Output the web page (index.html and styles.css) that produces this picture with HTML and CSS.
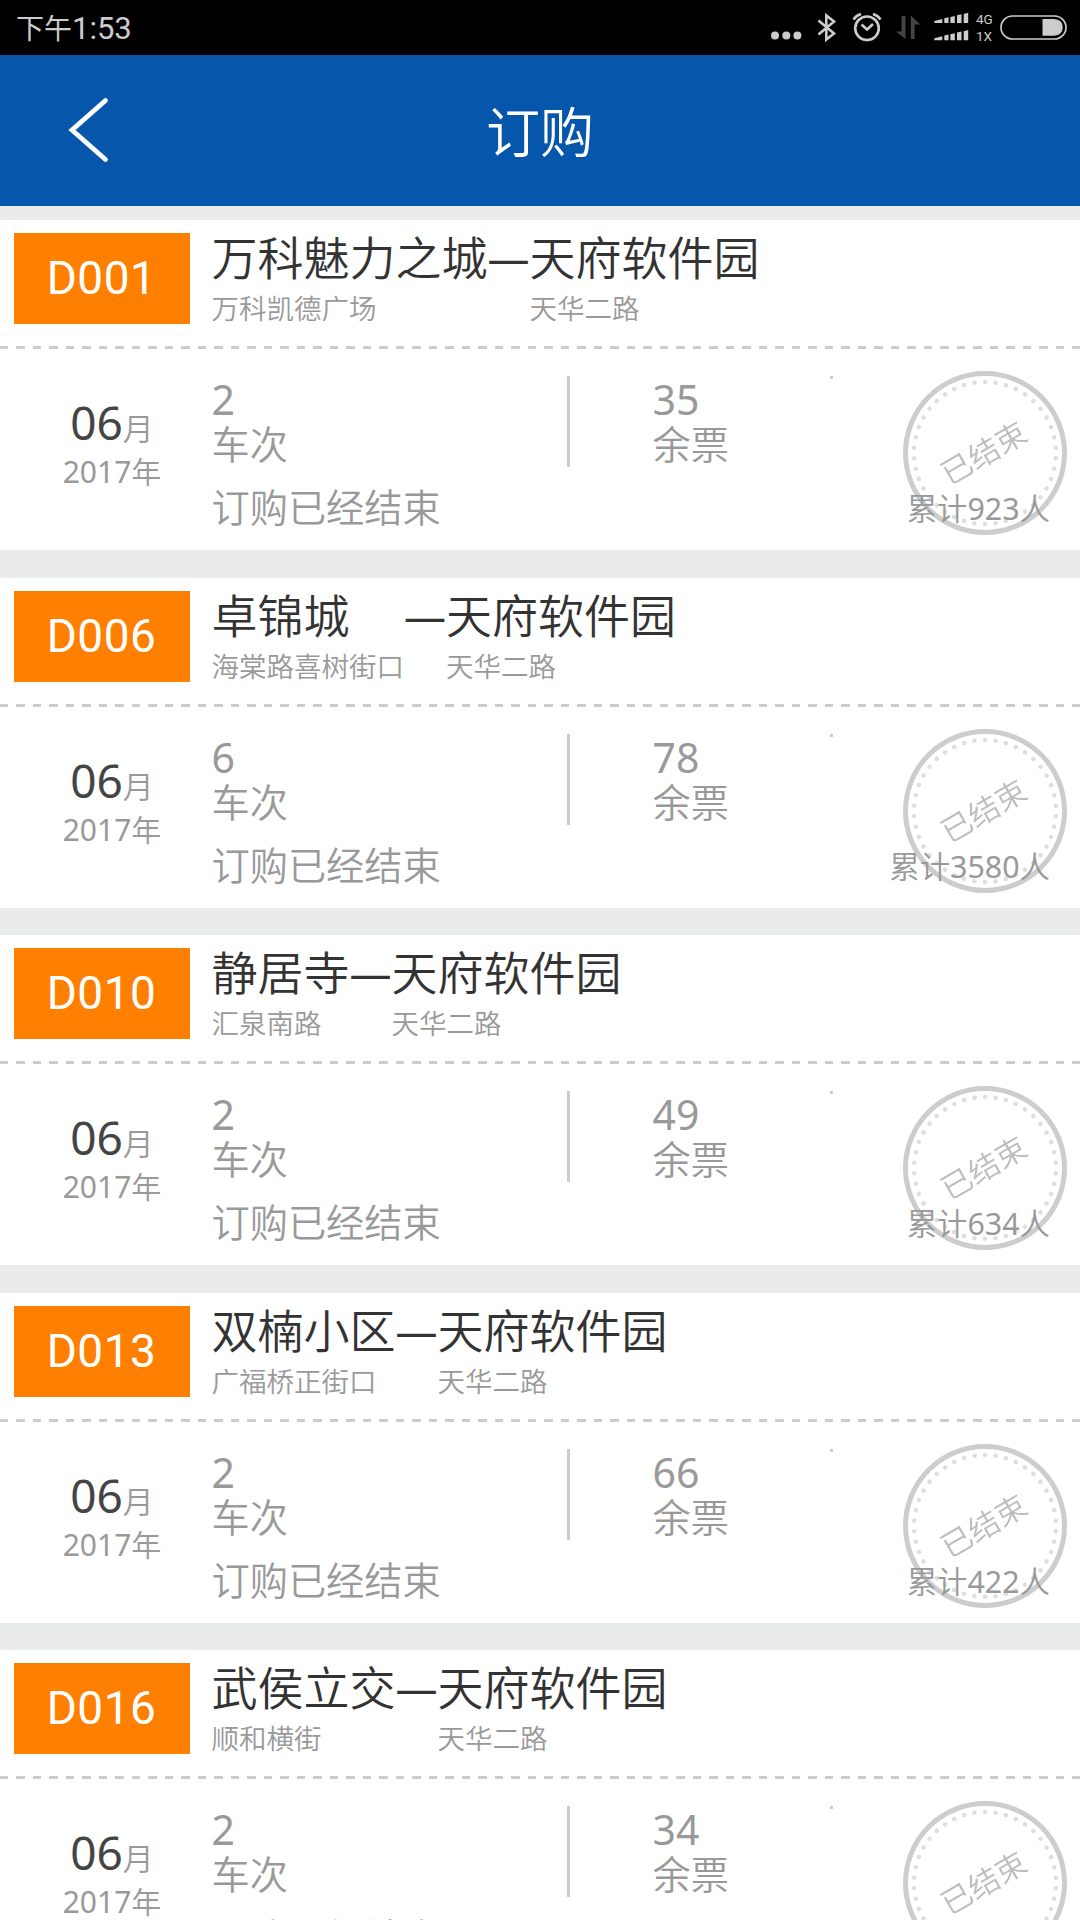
FILE: index.html
```html
<!DOCTYPE html>
<html lang="zh-CN">
<head>
    <meta charset="UTF-8">
    <meta name="viewport" content="width=device-width, initial-scale=1.0">
    <title>订购</title>
    <link rel="stylesheet" href="styles.css">
</head>
<body>

    <!-- 印章 -->
    <svg class="defs" width="0" height="0">
        <symbol id="stamp" viewBox="0 0 166 166">
            <circle cx="83" cy="83" r="79.5" fill="none" stroke="#cdcdcd" stroke-width="5"/>
            <circle cx="83" cy="83" r="71" fill="none" stroke="#dedede" stroke-width="4.4" stroke-linecap="round" pathLength="420" stroke-dasharray="0.1 9.9" stroke-dashoffset="5"/>
            <text x="82" y="93.5" transform="rotate(-30 83 83)" text-anchor="middle" textLength="93" lengthAdjust="spacingAndGlyphs" font-size="30" fill="#bdbdbd">已结束</text>
        </symbol>
    </svg>

    <div class="status-bar">
        <span class="time">下午<span>1:53</span></span>
        <svg class="status-icons" width="340" height="55" viewBox="0 0 340 55">
            <g fill="#ccc">
                <circle cx="35" cy="35.5" r="4"/>
                <circle cx="46.3" cy="35.5" r="4"/>
                <circle cx="57.4" cy="35.5" r="4"/>
            </g>
            <path d="M78.5 20.5L94 33.5L86.3 39.5V15.5L94 21.5L78.5 34.5" fill="none" stroke="#ccc" stroke-width="2.6"/>
            <g fill="none" stroke="#ccc" stroke-width="2.6">
                <circle cx="127" cy="28.3" r="11.8"/>
                <path d="M121.5 24.5L127 29.5L133 24"/>
                <path d="M113.5 19.5Q116 15.5 121 14M140.5 19.5Q138 15.5 133 14"/>
            </g>
            <path d="M161.5 16H165.5V39L156 31.5H161.5ZM170.8 39V15.5L180.3 24.5H174.6V39Z" fill="#444"/>
            <g fill="#ccc">
                <path id="signal" d="M194.3 22.9V21L202.3 19V22.9ZM204.3 22.9V18.3L208.5 17.3V22.9ZM210.4 22.9V17L214.8 16V22.9ZM217 22.9V15.3L221.5 14.2V22.9ZM223.7 22.9V14L228.2 12.8V22.9Z"/>
                <use href="#signal" y="17.3"/>
                <text x="236" y="24" font-size="13.5">4G</text>
                <text x="236" y="41" font-size="13.5">1X</text>
                <path d="M302.5 19H314Q322.7 19.5 322.7 27.3Q322.7 35.2 314 35.7H302.5Z"/>
            </g>
            <rect x="261" y="16" width="65" height="23" rx="11.5" fill="none" stroke="#ccc" stroke-width="1.7"/>
        </svg>
    </div>

    <div class="header">
        <svg class="back" width="44" height="70" viewBox="0 0 44 70">
            <path d="M39.5 4.5L6 34L39.5 63.5" fill="none" stroke="#fff" stroke-width="4.8" stroke-linecap="round"/>
        </svg>
        <h1>订购</h1>
    </div>

    <div class="list">
        <div class="card">
            <div class="card-top">
                <div class="code">D001</div>
                <div class="station"><h2>万科魅力之城</h2><p>万科凯德广场</p></div>
                <span class="dash">—</span>
                <div class="station"><h2>天府软件园</h2><p>天华二路</p></div>
            </div>
            <div class="card-body">
                <div class="date"><div class="month"><b>06</b>月</div><div class="year">2017年</div></div>
                <div class="runs"><div class="num">2</div><div class="label">车次</div><div class="state">订购已经结束</div></div>
                <div class="tickets"><div class="num">35</div><div class="label">余票</div></div>
                <i class="dot"></i>
                <svg class="stamp"><use href="#stamp"/></svg>
                <div class="total">累计923人</div>
            </div>
        </div>

        <div class="card">
            <div class="card-top">
                <div class="code">D006</div>
                <div class="station"><h2>卓锦城</h2><p>海棠路喜树街口</p></div>
                <span class="dash">—</span>
                <div class="station"><h2>天府软件园</h2><p>天华二路</p></div>
            </div>
            <div class="card-body">
                <div class="date"><div class="month"><b>06</b>月</div><div class="year">2017年</div></div>
                <div class="runs"><div class="num">6</div><div class="label">车次</div><div class="state">订购已经结束</div></div>
                <div class="tickets"><div class="num">78</div><div class="label">余票</div></div>
                <i class="dot"></i>
                <svg class="stamp"><use href="#stamp"/></svg>
                <div class="total">累计3580人</div>
            </div>
        </div>

        <div class="card">
            <div class="card-top">
                <div class="code">D010</div>
                <div class="station"><h2>静居寺</h2><p>汇泉南路</p></div>
                <span class="dash">—</span>
                <div class="station"><h2>天府软件园</h2><p>天华二路</p></div>
            </div>
            <div class="card-body">
                <div class="date"><div class="month"><b>06</b>月</div><div class="year">2017年</div></div>
                <div class="runs"><div class="num">2</div><div class="label">车次</div><div class="state">订购已经结束</div></div>
                <div class="tickets"><div class="num">49</div><div class="label">余票</div></div>
                <i class="dot"></i>
                <svg class="stamp"><use href="#stamp"/></svg>
                <div class="total">累计634人</div>
            </div>
        </div>

        <div class="card">
            <div class="card-top">
                <div class="code">D013</div>
                <div class="station"><h2>双楠小区</h2><p>广福桥正街口</p></div>
                <span class="dash">—</span>
                <div class="station"><h2>天府软件园</h2><p>天华二路</p></div>
            </div>
            <div class="card-body">
                <div class="date"><div class="month"><b>06</b>月</div><div class="year">2017年</div></div>
                <div class="runs"><div class="num">2</div><div class="label">车次</div><div class="state">订购已经结束</div></div>
                <div class="tickets"><div class="num">66</div><div class="label">余票</div></div>
                <i class="dot"></i>
                <svg class="stamp"><use href="#stamp"/></svg>
                <div class="total">累计422人</div>
            </div>
        </div>

        <div class="card">
            <div class="card-top">
                <div class="code">D016</div>
                <div class="station"><h2>武侯立交</h2><p>顺和横街</p></div>
                <span class="dash">—</span>
                <div class="station"><h2>天府软件园</h2><p>天华二路</p></div>
            </div>
            <div class="card-body">
                <div class="date"><div class="month"><b>06</b>月</div><div class="year">2017年</div></div>
                <div class="runs"><div class="num">2</div><div class="label">车次</div><div class="state">订购已经结束</div></div>
                <div class="tickets"><div class="num">34</div><div class="label">余票</div></div>
                <i class="dot"></i>
                <svg class="stamp"><use href="#stamp"/></svg>
            </div>
        </div>
    </div>

</body>
</html>
```

FILE: styles.css
```css
* {
    box-sizing: border-box;
    margin: 0;
    padding: 0;
}

body {
    width: 1080px;
    height: 1920px;
    overflow: hidden;
    background-color: #eaecec;
    font-family: "Noto Sans", "Noto Sans CJK SC DemiLight", "Noto Sans CJK SC", sans-serif;
    color: #999;
}

h1, h2, b {
    font-weight: normal;
}

.defs {
    position: absolute;
}

.status-bar {
    display: flex;
    justify-content: space-between;
    height: 55px;
    background-color: #000;
    color: #ccc;
    font-family: Roboto, "Noto Sans CJK SC", sans-serif;
}

.time {
    padding-left: 16px;
    font-size: 28px;
    line-height: 58px;
}

.time span {
    font-size: 31px;
}

.header {
    display: flex;
    align-items: center;
    height: 151px;
    padding: 0 66px;
    background-color: #0657ab;
    color: #fff;
}

.header h1 {
    flex: 1;
    padding: 3px 44px 0 0;
    text-align: center;
    font-size: 54px;
    line-height: 60px;
}

.list {
    padding-top: 14px;
}

.card {
    height: 330px;
    margin-bottom: 27.5px;
    background-color: #fff;
}

.card-top {
    display: flex;
    height: 129px;
    padding: 13px 14px 0 13.5px;
    background: repeating-linear-gradient(to right, #ccc 0, #ccc 8.5px, #fff 8.5px, #fff 16.5px) left bottom / 100% 3px no-repeat;
}

.code {
    width: 176px;
    height: 91px;
    margin-right: 22px;
    background-color: #ff8000;
    color: #fff;
    font-family: Roboto, sans-serif;
    font-size: 46px;
    line-height: 91px;
    letter-spacing: 0.5px;
    text-align: center;
}

.station h2 {
    color: #333;
    font-size: 46px;
    line-height: 48px;
}

.station p {
    font-size: 27.5px;
    line-height: 56px;
}

.dash {
    display: flex;
    justify-content: center;
    width: 42px;
    color: #333;
    font-size: 42px;
    line-height: 49px;
}

.card-body {
    display: flex;
    position: relative;
    height: 201px;
    padding-top: 27px;
}

.date {
    width: 224px;
    margin-right: -12.5px;
    padding-top: 18px;
    text-align: center;
}

.month {
    font-size: 31px;
    line-height: 56px;
}

.month b {
    color: #444;
    font-size: 46px;
}

.year {
    font-size: 30px;
    line-height: 32px;
}

.runs {
    width: 355px;
}

.num {
    font-size: 41px;
    line-height: 46px;
}

.label {
    font-size: 38.2px;
    line-height: 44px;
}

.state {
    padding-top: 18px;
    font-size: 38.2px;
    line-height: 46px;
}

.tickets {
    height: 91px;
    padding-left: 83px;
    border-left: 3px solid #ccc;
}

.dot {
    position: absolute;
    left: 830px;
    top: 27px;
    width: 3px;
    height: 3px;
    background-color: #ccc;
}

.stamp {
    position: absolute;
    right: 12.5px;
    top: 21px;
    width: 166px;
    height: 166px;
    filter: blur(0.7px);
}

.total {
    position: absolute;
    right: 30px;
    top: 137px;
    font-size: 30.4px;
    line-height: 46px;
}
```
